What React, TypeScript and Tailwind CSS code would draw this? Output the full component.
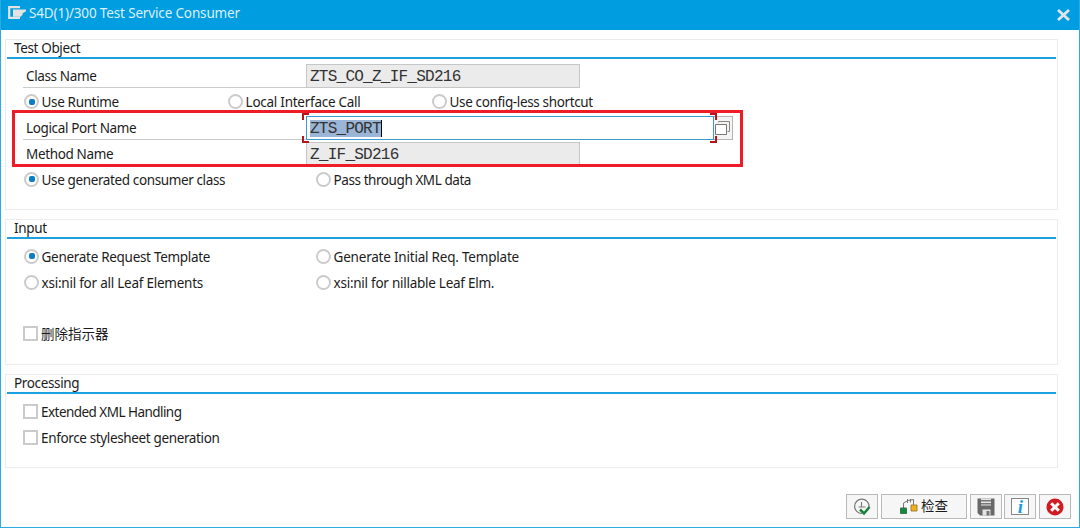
import type { ReactNode } from "react";

const Radio = ({ on = false, label, className = "" }: { on?: boolean; label: string; className?: string }) => (
  <label className={`flex shrink-0 items-center gap-[2.6px] whitespace-nowrap ${className}`}>
    <span className="mb-[2px] flex size-[15px] shrink-0 items-center justify-center rounded-full border-[2.5px] border-[#cbcbcb] bg-white">
      {on && <span className="size-[6px] shrink-0 rounded-[2px] bg-[#0a7fc4]" />}
    </span>
    <span>{label}</span>
  </label>
);

const Check = ({ label, className = "" }: { label: string; className?: string }) => (
  <label className={`flex h-[26px] items-center gap-[3px] whitespace-nowrap pl-[16px] ${className}`}>
    <span className="mb-[2px] size-[15px] shrink-0 border-2 border-[#cbcbcb] bg-white" />
    <span>{label}</span>
  </label>
);

const Group = ({ title, className, children }: { title: string; className: string; children: ReactNode }) => (
  <section className={`mx-[4px] mr-[21px] border border-[#ececec] px-[1px] ${className}`}>
    <h2 className="h-[19px] border-b-2 border-[#1ba1e0] pl-[7px] leading-[17px]">{title}</h2>
    {children}
  </section>
);

const FieldLabel = ({ children, line = true }: { children: ReactNode; line?: boolean }) => (
  <span className={`ml-[16px] h-[24px] w-[283px] shrink-0 border-b pl-[3px] leading-[25px] ${line ? "border-[#cccccc]" : "border-transparent"}`}>
    {children}
  </span>
);

const monoText = "font-['Liberation_Mono',monospace] text-[16px] tracking-[-0.75px]";

const Field = ({ children }: { children: ReactNode }) => (
  <span className={`h-[24px] w-[274px] border border-[#c6c6c6] bg-[#ebebeb] pl-[3px] leading-[25px] text-[#333] ${monoText}`}>
    {children}
  </span>
);

const ToolButton = ({ children, wide = false }: { children: ReactNode; wide?: boolean }) => (
  <button className={`flex h-[25px] items-center justify-center border border-[#b9b9b9] bg-[#f6f6f6] ${wide ? "w-[86px] gap-[3px]" : "w-[32px]"}`}>
    {children}
  </button>
);

export default function App() {
  return (
    <main className="flex h-[528px] w-[1080px] flex-col overflow-hidden border border-t-0 border-[#2caae2] bg-white font-['Noto_Sans','Noto_Sans_CJK_SC',sans-serif] text-[13.5px] tracking-[-0.36px] text-[#1c1c1c]">
      <header className="flex h-[30px] shrink-0 items-center bg-[#009de0] pb-[3px] pl-[7px] pr-[9px] text-[#dceffa]">
        <svg width="18" height="13" viewBox="0 0 18 13" className="mt-[-2px]">
          <path d="M12 1.2H1.2v10.6H12" fill="none" stroke="#e3e3e3" strokeWidth="2.2" />
          <path d="M5 3.4h13v1.8l-3.4 2v1.6l-2 2H5z" fill="#e3e3e3" />
        </svg>
        <h1 className="ml-[3px] tracking-[-0.15px]">S4D(1)/300 Test Service Consumer</h1>
        <svg width="13" height="12" viewBox="0 0 13 12" className="ml-auto mt-[3px]">
          <path d="M1 1l11 10M12 1L1 11" stroke="#e2e5e7" strokeWidth="2.8" />
        </svg>
      </header>

      <Group title="Test Object" className="mt-[9px] h-[171px]">
        <div className="flex h-[31px] pt-[5px]">
          <FieldLabel>Class Name</FieldLabel>
          <Field>ZTS_CO_Z_IF_SD216</Field>
        </div>
        <div className="flex h-[26px] items-center pb-[1px] pl-[17px]">
          <Radio on label="Use Runtime" className="w-[204px]" />
          <Radio label="Local Interface Call" className="w-[204px] tracking-[-0.26px]" />
          <Radio label="Use config-less shortcut" />
        </div>
        <div className="relative flex h-[26px]">
          <FieldLabel>Logical Port Name</FieldLabel>
          <span className={`flex h-[24px] w-[408px] items-center border border-[#3b9bd0] bg-white pl-[3px] text-[#333] ${monoText}`}>
            <span className="h-[17px] border-r border-black bg-[#9ab5d5] leading-[18px]">ZTS_PORT</span>
          </span>
          <button className="flex h-[24px] w-[19px] items-center justify-center border border-l-0 border-[#b5b5b5] bg-[#f4f4f4]">
            <svg width="17" height="17" viewBox="0 0 17 17" fill="none">
              <path d="M3.5 2.5v-1h11v10h-2" stroke="#8b857d" />
              <path d="M.5 4.5h11v10H.5z" fill="#fff" stroke="#777" />
            </svg>
          </button>
          <svg className="absolute left-[295px] top-[-3px]" width="416" height="30" viewBox="0 0 416 30" fill="none">
            <path d="M7 1H1v6M1 23v6h6M408 1h6v6M414 23v6h-6" stroke="#b51419" strokeWidth="2" />
          </svg>
          <span className="pointer-events-none absolute left-[5px] top-[-6px] h-[57px] w-[731px] border-[3px] border-[#ed1c26]" />
        </div>
        <div className="flex h-[25px]">
          <FieldLabel line={false}>Method Name</FieldLabel>
          <Field>Z_IF_SD216</Field>
        </div>
        <div className="flex h-[26px] items-center pl-[17px]">
          <Radio on label="Use generated consumer class" className="w-[292px] tracking-[-0.38px]" />
          <Radio label="Pass through XML data" className="tracking-[-0.43px]" />
        </div>
      </Group>

      <Group title="Input" className="mt-[9px] h-[146px]">
        <div className="mt-[5px] flex h-[26px] items-center pl-[17px]">
          <Radio on label="Generate Request Template" className="w-[292px] tracking-[-0.3px]" />
          <Radio label="Generate Initial Req. Template" className="tracking-[-0.21px]" />
        </div>
        <div className="flex h-[26px] items-center pl-[17px]">
          <Radio label="xsi:nil for all Leaf Elements" className="w-[292px] tracking-[-0.24px]" />
          <Radio label="xsi:nil for nillable Leaf Elm." className="tracking-[-0.26px]" />
        </div>
        <Check label="删除指示器" className="mt-[25px] tracking-normal" />
      </Group>

      <Group title="Processing" className="mt-[9px] h-[94px]">
        <Check label="Extended XML Handling" className="mt-[5px] tracking-[-0.54px]" />
        <Check label="Enforce stylesheet generation" />
      </Group>

      <footer className="mr-[8px] mt-[26px] flex justify-end gap-[2.7px]">
        <ToolButton>
          <svg width="18" height="18" viewBox="0 0 18 18" fill="none">
            <path d="M9 15.5A7.2 7.2 0 1 1 16 9" stroke="#777" strokeWidth="1.2" />
            <path d="M8.5 4v5h4M5.5 9h3" stroke="#777" strokeWidth="1.1" />
            <path d="M7 11.5l4 4L16.5 9" stroke="#16803c" strokeWidth="2.5" />
          </svg>
        </ToolButton>
        <ToolButton wide>
          <svg width="18" height="17" viewBox="0 0 18 17" fill="none">
            <path d="M3.5 10V5L8 2.5l5.5-1V7M7.5 1v4M10.5 1v3.5" stroke="#777" />
            <path d="M.5 10h6v5.5h-6z" fill="#0e8b3d" stroke="#3e7250" />
            <path d="M11 7h6v6h-6z" fill="#f3ae16" stroke="#a5813a" />
          </svg>
          <span className="tracking-normal">检查</span>
        </ToolButton>
        <ToolButton>
          <svg width="18" height="18" viewBox="0 0 18 18">
            <path d="M.5.5h17v17H3l-2.5-2.5z" fill="#696969" />
            <path d="M4 .5h10v7H4zM5.5 11.5h8v6h-8z" fill="#e5e5e5" />
            <path d="M4 2h10v1.5H4zM4 5h10v1.5H4zM9.5 13h3v4.500h-3z" fill="#777" />
          </svg>
        </ToolButton>
        <ToolButton>
          <span className="flex h-[17px] w-[18px] items-center justify-center border border-[#858585] bg-white font-['Liberation_Serif',serif] text-[19px] font-bold italic leading-none text-[#169fe0]">i</span>
        </ToolButton>
        <ToolButton>
          <svg width="18" height="18" viewBox="0 0 18 18">
            <circle cx="9" cy="9" r="8.5" fill="#cf1b22" />
            <path d="M5.2 5.2l7.6 7.6M12.8 5.2l-7.6 7.6" stroke="#fff" strokeWidth="3" />
          </svg>
        </ToolButton>
      </footer>
    </main>
  );
}
